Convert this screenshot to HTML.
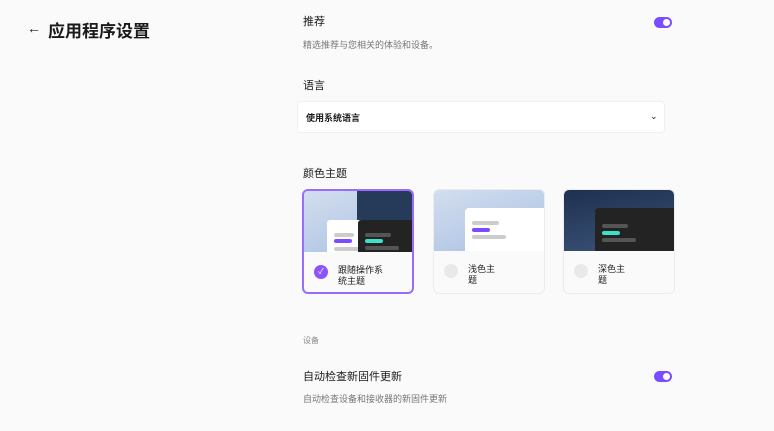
<!DOCTYPE html>
<html><head><meta charset="utf-8"><style>
*{margin:0;padding:0;box-sizing:border-box}
body{width:774px;height:431px;background:#fafafa;font-family:"Liberation Sans","Noto Sans CJK SC",sans-serif;color:#1a1a1a;position:relative;overflow:hidden}
.a{position:absolute}
.tog{position:absolute;width:18px;height:11px;border-radius:6px;background:#7c4dff}
.tog::after{content:"";position:absolute;right:2px;top:2px;width:7px;height:7px;border-radius:50%;background:#fff}
.card{position:absolute;top:189px;width:112px;height:105px;border:1px solid #ececec;border-radius:6px;background:#fafafa;overflow:hidden}
.img{position:absolute;left:0;top:0;width:100%;height:61px;overflow:hidden}
.ln{position:absolute;height:4px;border-radius:2px}
.chk{position:absolute;left:10px;top:74px;width:14px;height:14px;border-radius:50%;background:#ebe8e8}
.lab{position:absolute;left:34px;top:74px;font-size:9px;line-height:11px;color:#222}
</style></head><body>
<div class="a" style="left:27px;top:20px;font-size:14px">←</div>
<div class="a" style="left:48px;top:17px;font-size:17px;font-weight:bold">应用程序设置</div>
<div class="a" style="left:303px;top:13px;font-size:11px">推荐</div>
<div class="tog" style="left:654px;top:17px"></div>
<div class="a" style="left:303px;top:38px;font-size:9px;color:#777">精选推荐与您相关的体验和设备。</div>
<div class="a" style="left:303px;top:77px;font-size:11px">语言</div>
<div class="a" style="left:297px;top:101px;width:368px;height:32px;background:#fff;border:1px solid #f0f0f0;border-radius:4px"></div>
<div class="a" style="left:306px;top:111px;font-size:9px;font-weight:bold">使用系统语言</div>
<div class="a" style="left:650px;top:111px;font-size:9px">⌄</div>
<div class="a" style="left:303px;top:165px;font-size:11px">颜色主题</div>

<div class="card" style="left:302px;border:2px solid #9a6bff">
 <div class="img" style="background:linear-gradient(160deg,#d3deef,#a8c0e2)">
  <div class="a" style="left:53px;top:0;width:60px;height:61px;background:#263a5a"></div>
  <div class="a" style="left:23px;top:29px;width:40px;height:32px;background:#fff;border-radius:3px 0 0 0"></div>
  <div class="ln" style="left:30px;top:42px;width:20px;background:#ccc"></div>
  <div class="ln" style="left:30px;top:48px;width:18px;background:#7c4dff"></div>
  <div class="ln" style="left:30px;top:56px;width:25px;background:#ccc"></div>
  <div class="a" style="left:54px;top:29px;width:60px;height:32px;background:#232323;border-radius:3px 0 0 0"></div>
  <div class="ln" style="left:61px;top:42px;width:26px;background:#555"></div>
  <div class="ln" style="left:61px;top:48px;width:18px;background:#3de0c8"></div>
  <div class="ln" style="left:61px;top:55px;width:34px;background:#555"></div>
 </div>
 <div class="chk" style="background:#8a55ff;color:#fff;font-size:8px;text-align:center;line-height:14px">✓</div>
 <div class="lab">跟随操作系<br>统主题</div>
</div>

<div class="card" style="left:433px">
 <div class="img" style="background:linear-gradient(160deg,#d3deef,#a8c0e2)">
  <div class="a" style="left:31px;top:18px;width:82px;height:43px;background:#fff;border-radius:4px 0 0 0"></div>
  <div class="ln" style="left:38px;top:31px;width:27px;background:#ccc"></div>
  <div class="ln" style="left:38px;top:38px;width:18px;background:#7c4dff"></div>
  <div class="ln" style="left:38px;top:45px;width:34px;background:#ccc"></div>
 </div>
 <div class="chk"></div>
 <div class="lab">浅色主<br>题</div>
</div>

<div class="card" style="left:563px">
 <div class="img" style="background:linear-gradient(170deg,#1f3050,#3b5478)">
  <div class="a" style="left:31px;top:18px;width:82px;height:43px;background:#232323;border-radius:4px 0 0 0"></div>
  <div class="ln" style="left:38px;top:34px;width:26px;background:#555"></div>
  <div class="ln" style="left:38px;top:41px;width:18px;background:#3de0c8"></div>
  <div class="ln" style="left:38px;top:48px;width:34px;background:#555"></div>
 </div>
 <div class="chk"></div>
 <div class="lab">深色主<br>题</div>
</div>

<div class="a" style="left:303px;top:335px;font-size:8px;color:#888">设备</div>
<div class="a" style="left:303px;top:368px;font-size:11px">自动检查新固件更新</div>
<div class="tog" style="left:654px;top:371px"></div>
<div class="a" style="left:303px;top:392px;font-size:9px;color:#777">自动检查设备和接收器的新固件更新</div>
</body></html>
